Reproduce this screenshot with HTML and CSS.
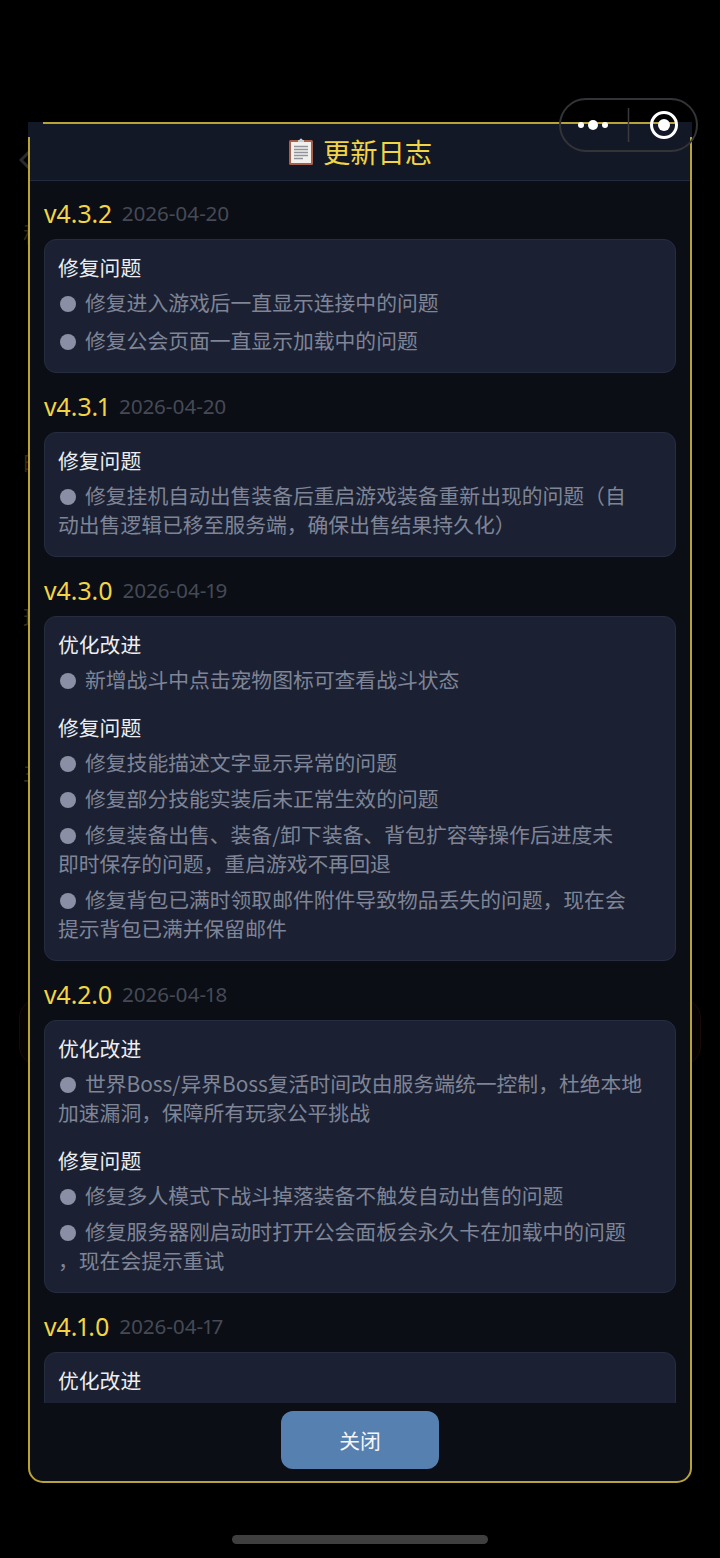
FILE: index.html
```html
<!DOCTYPE html>
<html lang="zh-CN">
<head>
    <meta charset="UTF-8">
    <meta name="viewport" content="width=device-width, initial-scale=1.0">
    <title>更新日志</title>
    <link rel="stylesheet" href="styles.css">
</head>
<body>
<div class="backdrop">
    <svg class="ghost-back" width="12" height="24" viewBox="0 0 12 24"><path d="M10 4 L2 12 L10 20" fill="none" stroke="#2c2c30" stroke-width="3"/></svg>
    <span class="ghost ghost-1">称</span>
    <span class="ghost ghost-2">的</span>
    <span class="ghost ghost-3">玛</span>
    <span class="ghost ghost-4">兰</span>
    <div class="ghost-card"></div>
</div>

<div class="modal">
    <header class="modal-header">
        <svg class="title-icon" width="26" height="28" viewBox="0 0 26 28">
            <rect x="1" y="3" width="24" height="25" rx="1.5" fill="#a8604a"/>
            <rect x="3" y="5" width="20" height="21" fill="#f2f0ec"/>
            <path d="M10 5 V3 H11.5 A1.5 1.5 0 0 1 14.5 3 H16 V5 Z" fill="#c9ced6"/>
            <path d="M6 9.5 H20 M6 12.5 H20 M6 15.5 H20 M6 18.5 H20 M6 21.5 H15" stroke="#8f949c" stroke-width="1.3"/>
        </svg>
        <h1>更新日志</h1>
    </header>

    <main class="modal-body">
        <section class="release">
            <div class="release-head"><span class="version">v4.3.2</span><span class="date">2026-04-20</span></div>
            <div class="card card-loose">
                <h2>修复问题</h2>
                <p class="item">修复进入游戏后一直显示连接中的问题</p>
                <p class="item">修复公会页面一直显示加载中的问题</p>
            </div>
        </section>

        <section class="release">
            <div class="release-head"><span class="version">v4.3.1</span><span class="date">2026-04-20</span></div>
            <div class="card">
                <h2>修复问题</h2>
                <p class="item">修复挂机自动出售装备后重启游戏装备重新出现的问题（自<br>动出售逻辑已移至服务端，确保出售结果持久化）</p>
            </div>
        </section>

        <section class="release">
            <div class="release-head"><span class="version">v4.3.0</span><span class="date">2026-04-19</span></div>
            <div class="card">
                <h2>优化改进</h2>
                <p class="item">新增战斗中点击宠物图标可查看战斗状态</p>
                <h2 class="next-group">修复问题</h2>
                <p class="item">修复技能描述文字显示异常的问题</p>
                <p class="item">修复部分技能实装后未正常生效的问题</p>
                <p class="item">修复装备出售、装备/卸下装备、背包扩容等操作后进度未<br>即时保存的问题，重启游戏不再回退</p>
                <p class="item">修复背包已满时领取邮件附件导致物品丢失的问题，现在会<br>提示背包已满并保留邮件</p>
            </div>
        </section>

        <section class="release">
            <div class="release-head"><span class="version">v4.2.0</span><span class="date">2026-04-18</span></div>
            <div class="card">
                <h2>优化改进</h2>
                <p class="item">世界Boss/异界Boss复活时间改由服务端统一控制，杜绝本地<br>加速漏洞，保障所有玩家公平挑战</p>
                <h2 class="next-group">修复问题</h2>
                <p class="item">修复多人模式下战斗掉落装备不触发自动出售的问题</p>
                <p class="item">修复服务器刚启动时打开公会面板会永久卡在加载中的问题<br>，现在会提示重试</p>
            </div>
        </section>

        <section class="release">
            <div class="release-head"><span class="version">v4.1.0</span><span class="date">2026-04-17</span></div>
            <div class="card card-tail">
                <h2>优化改进</h2>
            </div>
        </section>
    </main>

    <footer class="modal-footer">
        <button class="close-btn" type="button">关闭</button>
    </footer>
</div>

<div class="capsule">
    <svg width="139" height="54" viewBox="0 0 139 54">
        <circle cx="22" cy="27" r="3" fill="#fff"/>
        <circle cx="34" cy="27" r="5" fill="#fff"/>
        <circle cx="46" cy="27" r="3" fill="#fff"/>
        <path d="M69.5 10 V44" stroke="#3a3a3c" stroke-width="1.5"/>
        <circle cx="105" cy="27" r="12.5" fill="none" stroke="#fff" stroke-width="3"/>
        <circle cx="105" cy="27" r="6" fill="#fff"/>
    </svg>
</div>

<div class="home-bar"></div>
</body>
</html>
```

FILE: styles.css
```css
* {
    box-sizing: border-box;
}

html, body {
    height: 100%;
}

body {
    margin: 0;
    height: 1558px;
    padding: 122px 28px 75px;
    background-color: #000;
    font-family: "Noto Sans CJK SC", "Noto Sans", sans-serif;
    font-size: 20.8px;
    overflow: hidden;
    position: relative;
}

/* page dimmed behind the modal */
.backdrop {
    position: absolute;
    inset: 0;
}

.ghost-back {
    position: absolute;
    left: 19px;
    top: 148px;
}

.ghost {
    position: absolute;
    left: 23px;
    color: #3a2a10;
    font-size: 22px;
    line-height: 26px;
}

.ghost-1 { top: 219px; }
.ghost-2 { top: 447px; }
.ghost-3 { top: 603px; }
.ghost-4 { top: 757px; }

.ghost-card {
    position: absolute;
    left: 19px;
    top: 998px;
    width: 682px;
    height: 68px;
    border: 1px solid #180a0a;
    border-radius: 20px;
    background-color: #070303;
}

.modal {
    position: relative;
    height: 100%;
    display: flex;
    flex-direction: column;
    background-color: #0b0e15;
    border: 2px solid #b9a238;
    border-radius: 15px;
}

.modal-header {
    flex: none;
    position: relative;
    height: 57px;
    padding-bottom: 3px;
    display: flex;
    align-items: center;
    justify-content: center;
    gap: 9px;
    background-color: #131826;
    border-bottom: 1px solid #232a3d;
}

/* top corners stay square, the header sits over the rounded border */
.modal-header::before,
.modal-header::after {
    content: "";
    position: absolute;
    top: -2px;
    width: 15px;
    height: 15px;
    background-color: #131826;
}

.modal-header::before {
    left: -2px;
}

.modal-header::after {
    right: -2px;
}

.modal-header h1 {
    margin: 0;
    font-size: 27.3px;
    font-weight: 400;
    color: #f2d544;
}

.modal-body {
    flex: 1;
    min-height: 0;
    overflow: hidden;
    padding: 15px 14px 0;
}

.release {
    margin-bottom: 16px;
}

.release-head {
    display: flex;
    align-items: center;
    gap: 10px;
    height: 34px;
    margin-bottom: 9px;
}

.version {
    font-family: "Noto Sans", "Noto Sans CJK SC", sans-serif;
    font-size: 24.8px;
    color: #f2d544;
    font-variant-numeric: proportional-nums;
}

.date {
    font-family: "Noto Sans", "Noto Sans CJK SC", sans-serif;
    font-size: 20.6px;
    color: #454a56;
    font-variant-numeric: proportional-nums;
}

.card {
    padding: 12px 13px 13px;
    background-color: #1b2133;
    border: 1px solid #262d41;
    border-radius: 12px;
}

.card-loose .item + .item {
    margin-top: 2px;
}

.card-tail {
    height: 120px;
}

.card h2 {
    margin: 0 0 3px;
    font-size: 20.8px;
    font-weight: 400;
    line-height: 30px;
    color: #eceef2;
}

.card h2.next-group {
    margin-top: 14px;
}

.item {
    margin: 0;
    padding: 3px 0 4px;
    line-height: 29px;
    color: #7f8596;
}

.item::before {
    content: "";
    display: inline-block;
    width: 16px;
    height: 16px;
    margin: 0 9px 0 2px;
    border-radius: 50%;
    background-color: #8b8fa5;
    vertical-align: -1px;
}

.modal-footer {
    flex: none;
    height: 78px;
    display: flex;
    justify-content: center;
    padding-top: 8px;
}

.close-btn {
    width: 158px;
    height: 58px;
    border: none;
    border-radius: 12px;
    background-color: #5580b0;
    color: #f4f6f9;
    font: inherit;
}

.capsule {
    position: absolute;
    left: 559px;
    top: 98px;
    width: 139px;
    height: 54px;
    border: 2px solid #333438;
    border-radius: 27px;
}

.capsule svg {
    display: block;
    margin: -2px;
}

.home-bar {
    position: absolute;
    left: 232px;
    top: 1535px;
    width: 256px;
    height: 9px;
    border-radius: 5px;
    background-color: #3f3f3f;
}
```
